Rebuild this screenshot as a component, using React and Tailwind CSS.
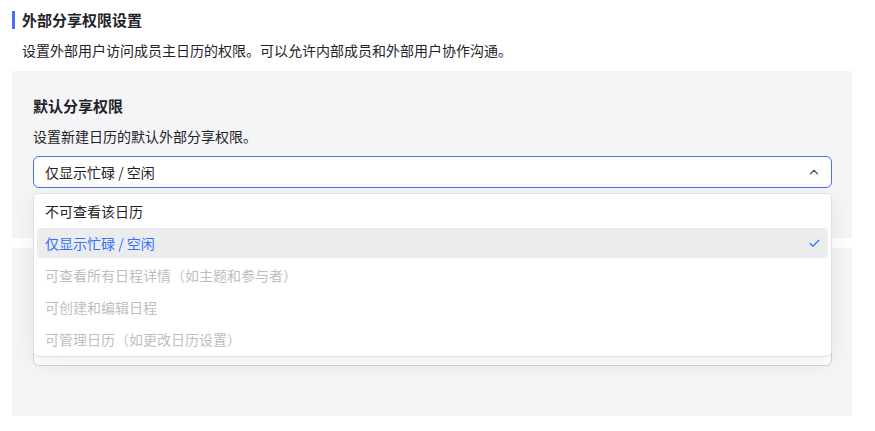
import { ChevronUp, Check } from "lucide-react";

const options = [
  { label: "不可查看该日历", state: "normal" },
  { label: "仅显示忙碌 / 空闲", state: "selected" },
  { label: "可查看所有日程详情（如主题和参与者）", state: "disabled" },
  { label: "可创建和编辑日程", state: "disabled" },
  { label: "可管理日历（如更改日历设置）", state: "disabled" },
];

const App = () => {
  return (
    <div
      className="h-[431px] w-[875px] bg-white"
      style={{ fontFamily: '"Noto Sans CJK SC", "Noto Sans", sans-serif' }}
    >
      <div className="flex items-center pl-[12px] pt-[11px]">
        <div className="h-[18px] w-[3px] bg-[#4e6ef2]" />
        <div className="ml-[7px] text-[15px] leading-[18px] font-semibold text-[#1f2329]">外部分享权限设置</div>
      </div>
      <div className="mt-[11px] pl-[22px] text-[14px] leading-[20px] text-[#1f2329]">
        设置外部用户访问成员主日历的权限。可以允许内部成员和外部用户协作沟通。
      </div>

      <div className="ml-[12px] mt-[11px] flex w-[840px] flex-col gap-[10px]">
        {/* 默认分享权限 */}
        <div className="relative z-10 h-[167px] bg-[#f4f5f6] pl-[21px] pr-[20px] pt-[24px]">
          <div className="text-[15px] leading-[22px] font-semibold text-[#1f2329]">默认分享权限</div>
          <div className="mt-[9px] text-[14px] leading-[20px] text-[#1f2329]">设置新建日历的默认外部分享权限。</div>
          <div className="relative mt-[10px]">
            <button
              type="button"
              className="flex h-[32px] w-full items-center justify-between rounded-[6px] border border-[#4e6ef2] bg-white pl-[11px] pr-[10px] text-left text-[14px] text-[#1f2329]"
            >
              <span>仅显示忙碌 / 空闲</span>
              <ChevronUp size={14} strokeWidth={2.2} className="text-[#51565d]" />
            </button>
            <div className="absolute left-0 right-0 top-[37px] rounded-[6px] border border-[#dee0e3] bg-white px-[3px] py-[2px] shadow-[0_6px_24px_rgba(31,35,41,0.08)]">
              <ul className="flex flex-col gap-[2px]">
                {options.map((o) => (
                  <li
                    key={o.label}
                    className={
                      o.state === "selected"
                        ? "flex h-[30px] items-center justify-between rounded-[4px] bg-[#ebeced] pl-[8px] pr-[7px] text-[14px] text-[#3370ff]"
                        : o.state === "disabled"
                        ? "flex h-[30px] items-center pl-[8px] text-[14px] text-[#bbbfc4]"
                        : "flex h-[30px] items-center pl-[8px] text-[14px] text-[#1f2329]"
                    }
                  >
                    <span>{o.label}</span>
                    {o.state === "selected" && <Check size={13} strokeWidth={2.2} className="text-[#3370ff]" />}
                  </li>
                ))}
              </ul>
            </div>
          </div>
        </div>

        {/* 第二项设置，内容被下拉菜单遮挡 */}
        <div className="flex h-[168px] flex-col justify-end bg-[#f4f5f6] pb-[50px] pl-[21px] pr-[20px]">
          <div className="h-[31px] rounded-[6px] border border-[#d0d3d6] bg-white" />
        </div>
      </div>
    </div>
  );
};

export default App;
